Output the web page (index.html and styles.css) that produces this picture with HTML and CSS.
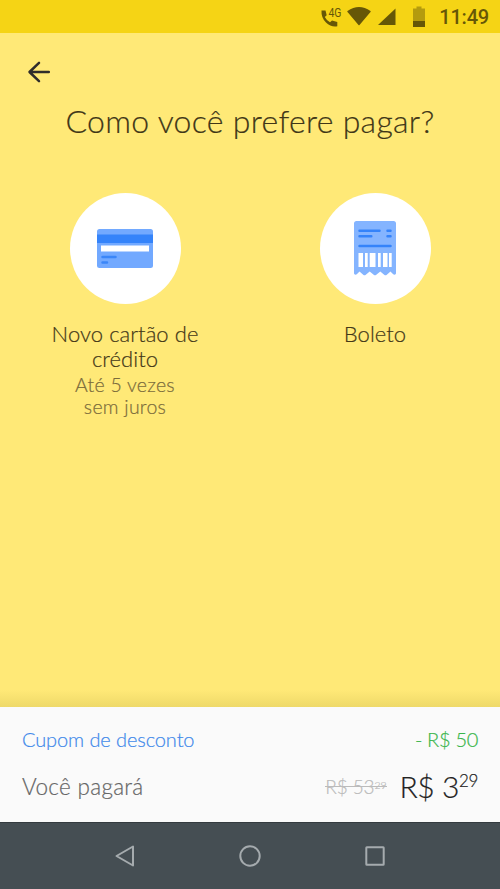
FILE: index.html
```html
<!DOCTYPE html>
<html lang="pt-BR">
<head>
<meta charset="utf-8">
<title>Pagamento</title>
<link rel="stylesheet" href="styles.css">
</head>
<body>
<div class="screen">
  <header class="status">
    <svg class="status-icons" width="112" height="33" viewBox="0 0 112 33">
      <g fill="#665707">
        <path d="M1.500 10.500H5.500L6.700 15.300L4.800 17.100Q6.500 20.500 10 22.200L12 20.500L17.300 22V26.200Q11 27.300 6 22.500Q1 17.500 1.500 10.500Z"/>
        <path d="M27.500 11Q39 3 50.500 11Q51 11.500 50.500 12L39.500 25Q39 25.500 38.500 25L27.500 12Q27 11.500 27.500 11Z"/>
        <path d="M58 25L75.500 8.500V25Z"/>
        <path opacity=".45" d="M93 8.500H96.500V6.500H101.500V8.500H105V21H93Z"/>
        <path d="M93 21H105V27H93Z"/>
      </g>
      <text class="net" x="8.500" y="17" textLength="13" lengthAdjust="spacingAndGlyphs">4G</text>
    </svg>
    <span class="clock">11:49</span>
  </header>
  <main class="content">
    <svg class="back" width="24" height="24" viewBox="0 0 24 24" fill="none" stroke="#302d2b" stroke-width="2.500" stroke-linecap="round" stroke-linejoin="round"><path d="M12 2.800L2.500 12L12 21.200M3 12H21.800"/></svg>
    <h1 class="title">Como você prefere pagar?</h1>
    <div class="options">
      <section class="option">
        <div class="disc">
          <svg width="56" height="39" viewBox="0 0 56 39">
            <rect width="56" height="39" rx="2.500" fill="#72a9ff"/>
            <path fill="#3483fa" d="M0 5.500H56V14H0Z"/>
            <path fill="#fff" d="M4 16.500H52V22.500H4Z"/>
            <path stroke="#3b86f8" stroke-width="2.500" stroke-linecap="round" d="M5.500 28H18.500M5.500 33.500H10"/>
          </svg>
        </div>
        <h2 class="name">Novo cartão de<br>crédito</h2>
        <p class="note">Até 5 vezes<br>sem juros</p>
      </section>
      <section class="option">
        <div class="disc">
          <svg width="42" height="55" viewBox="0 0 42 55">
            <path fill="#84b4ff" d="M2.500 0H39.500Q42 0 42 2.500V52.500Q41 54.500 39.200 53.300L36.500 50.500L32.500 54Q31.500 54.700 30.500 54L26.300 50.500L22 54Q21 54.700 20 54L15.700 50.500L11.500 54Q10.500 54.700 9.500 54L5.500 50.500L2.800 53.300Q1 54.500 0 52.500V2.500Q0 0 2.500 0Z"/>
            <path stroke="#3483fa" stroke-width="2.500" stroke-linecap="round" d="M5.500 9.700H25.500M5.500 15.300H17.300M33.500 9.700H36.500M33.500 15.300H36.500M5.500 25H36.500"/>
            <path fill="#fff" d="M4.500 32H9V46H4.500ZM11 32H13.700V46H11ZM15.700 32H21.500V46H15.700ZM24 32H26.700V46H24ZM29 32H33.500V46H29ZM35 32H37.700V46H35Z"/>
          </svg>
        </div>
        <h2 class="name">Boleto</h2>
      </section>
    </div>
  </main>
  <footer class="summary">
    <div class="row coupon"><span class="coupon-label">Cupom de desconto</span><span class="coupon-value">- R$ 50</span></div>
    <div class="row total"><span class="total-label">Você pagará</span><span class="prices"><span class="old">R$ 53<span class="old-cents">29</span></span><span class="price">R$ 3<span class="cents">29</span></span></span></div>
  </footer>
  <nav class="nav">
    <svg width="24" height="24" viewBox="0 0 24 24"><path d="M20 2.500V21.500L3.500 12Z"/></svg>
    <svg width="24" height="24" viewBox="0 0 24 24"><circle cx="12" cy="12" r="9.700"/></svg>
    <svg width="24" height="24" viewBox="0 0 24 24"><rect x="3.300" y="3.300" width="17.400" height="17.400" rx=".5"/></svg>
  </nav>
</div>
</body>
</html>
```
FILE: styles.css
```css
* { box-sizing: border-box; }
body { margin: 0; font-family: Lato, "Open Sans", sans-serif; font-weight: 300; color: #333; -webkit-text-stroke: .2px currentColor; }
h1, h2, p { margin: 0; font-weight: 300; white-space: nowrap; }
svg { display: block; flex: none; }
.screen { width: 500px; height: 889px; display: flex; flex-direction: column; overflow: hidden; }
.status { height: 33px; background: #f5d415; display: flex; justify-content: flex-end; align-items: center; padding-right: 11px; gap: 7px; -webkit-text-stroke: 0; }
.net { font: 400 12.500px Roboto, sans-serif; fill: #665707; }
.clock { font: 500 20px/33px Roboto, sans-serif; color: #665707; letter-spacing: -.2px; padding-top: 2px; }
.content { flex: 1; background: linear-gradient(#ffe977 0, #ffe977 calc(100% - 17px), #eed969 100%); }
.back { margin: 27px 0 0 27px; }
.title { margin-top: 16px; font-size: 32px; line-height: 42px; letter-spacing: .3px; text-align: center; color: #403617; }
.options { display: grid; grid-template-columns: 1fr 1fr; margin-top: 51px; }
.option { display: flex; flex-direction: column; align-items: center; text-align: center; }
.disc { width: 111px; height: 111px; border-radius: 50%; background: #fff; display: flex; align-items: center; justify-content: center; }
.name { margin-top: 17px; font-size: 22px; line-height: 25px; letter-spacing: .05px; color: #443817; }
.note { margin-top: 3px; font-size: 19.500px; line-height: 22px; letter-spacing: .25px; color: #7b6b3b; }
.summary { height: 115px; background: #fafafa; padding: 18px 22px 0; }
.row { display: flex; justify-content: space-between; align-items: center; white-space: nowrap; }
.coupon { height: 28px; font-size: 20px; letter-spacing: -.1px; }
.coupon-label { color: #4088ea; }
.coupon-value { color: #39b54a; letter-spacing: -.3px; }
.total { height: 44px; margin-top: 11px; }
.total-label { font-size: 22.500px; letter-spacing: .3px; color: #666; }
.prices { display: flex; align-items: center; gap: 13px; }
.old { position: relative; font-size: 19px; letter-spacing: -.1px; color: #bbb; }
.old::after { content: ""; position: absolute; left: 0; right: 0; top: 50%; height: 1px; background: #bbb; }
.old-cents { font-size: 10.500px; vertical-align: 5px; line-height: 1; }
.price { font-size: 30px; letter-spacing: -.4px; color: #222; }
.cents { font-size: 17px; vertical-align: 11px; line-height: 1; }
.nav { height: 67px; background: #454e53; border-top: 1px solid #343b3f; display: flex; align-items: center; justify-content: center; gap: 101px; fill: none; stroke: #a5abae; stroke-width: 2; stroke-linejoin: round; }
```
